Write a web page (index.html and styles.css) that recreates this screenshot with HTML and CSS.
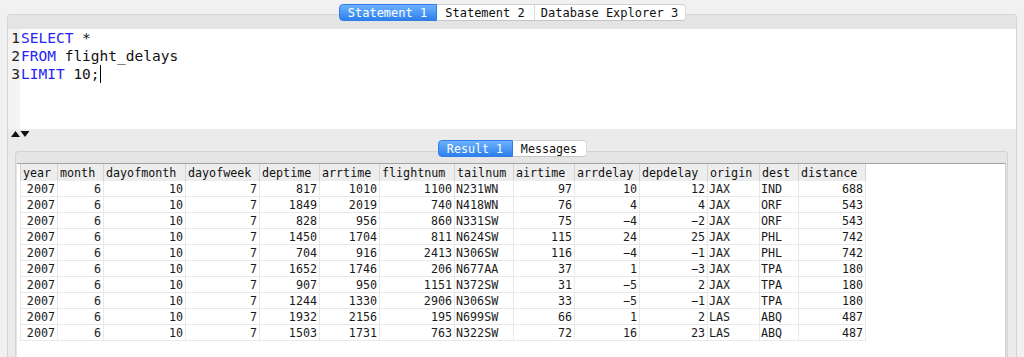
FILE: index.html
```html
<!DOCTYPE html>
<html>
<head>
    <title>SQL Workbench</title>
    <link rel="stylesheet" href="styles.css">
</head>
<body>

    <div class="tabbar top-tabs">
        <span class="tab active">Statement 1</span>
        <span class="tab">Statement 2</span>
        <span class="tab">Database Explorer 3</span>
    </div>

    <div class="workspace">
        <div class="editor">
            <div class="editor-head"></div>
            <div class="editor-body">
                <div class="gutter">
                    <div>1</div>
                    <div>2</div>
                    <div>3</div>
                </div>
                <div class="code">
                    <div class="line"><span class="kw">SELECT</span> *</div>
                    <div class="line"><span class="kw">FROM</span> flight_delays</div>
                    <div class="line"><span class="kw">LIMIT</span> 10;<span class="cursor"></span></div>
                </div>
            </div>
        </div>

        <div class="splitter">
            <svg width="20" height="6" viewBox="0 0 20 6">
                <polygon points="0,6 4.5,0 9,6" fill="#111"/>
                <polygon points="9.5,0 18.5,0 14,6" fill="#111"/>
            </svg>
        </div>

        <div class="tabbar result-tabs">
            <span class="tab active">Result 1</span>
            <span class="tab">Messages</span>
        </div>

        <div class="results">
            <div class="results-head"></div>
            <div class="results-body">
                <table class="grid">
                    <colgroup>
                        <col class="w37"><col class="w46"><col class="w82"><col class="w74">
                        <col class="w60"><col class="w60"><col class="w75"><col class="w59">
                        <col class="w61"><col class="w65"><col class="w68"><col class="w52">
                        <col class="w39"><col class="w67">
                    </colgroup>
                    <thead>
                        <tr>
                            <th>year</th><th>month</th><th>dayofmonth</th><th>dayofweek</th>
                            <th>deptime</th><th>arrtime</th><th>flightnum</th><th>tailnum</th>
                            <th>airtime</th><th>arrdelay</th><th>depdelay</th><th>origin</th>
                            <th>dest</th><th>distance</th>
                        </tr>
                    </thead>
                    <tbody>
                        <tr><td>2007</td><td>6</td><td>10</td><td>7</td><td>817</td><td>1010</td><td>1100</td><td class="txt">N231WN</td><td>97</td><td>10</td><td>12</td><td class="txt">JAX</td><td class="txt">IND</td><td>688</td></tr>
                        <tr><td>2007</td><td>6</td><td>10</td><td>7</td><td>1849</td><td>2019</td><td>740</td><td class="txt">N418WN</td><td>76</td><td>4</td><td>4</td><td class="txt">JAX</td><td class="txt">ORF</td><td>543</td></tr>
                        <tr><td>2007</td><td>6</td><td>10</td><td>7</td><td>828</td><td>956</td><td>860</td><td class="txt">N331SW</td><td>75</td><td>&minus;4</td><td>&minus;2</td><td class="txt">JAX</td><td class="txt">ORF</td><td>543</td></tr>
                        <tr><td>2007</td><td>6</td><td>10</td><td>7</td><td>1450</td><td>1704</td><td>811</td><td class="txt">N624SW</td><td>115</td><td>24</td><td>25</td><td class="txt">JAX</td><td class="txt">PHL</td><td>742</td></tr>
                        <tr><td>2007</td><td>6</td><td>10</td><td>7</td><td>704</td><td>916</td><td>2413</td><td class="txt">N306SW</td><td>116</td><td>&minus;4</td><td>&minus;1</td><td class="txt">JAX</td><td class="txt">PHL</td><td>742</td></tr>
                        <tr><td>2007</td><td>6</td><td>10</td><td>7</td><td>1652</td><td>1746</td><td>206</td><td class="txt">N677AA</td><td>37</td><td>1</td><td>&minus;3</td><td class="txt">JAX</td><td class="txt">TPA</td><td>180</td></tr>
                        <tr><td>2007</td><td>6</td><td>10</td><td>7</td><td>907</td><td>950</td><td>1151</td><td class="txt">N372SW</td><td>31</td><td>&minus;5</td><td>2</td><td class="txt">JAX</td><td class="txt">TPA</td><td>180</td></tr>
                        <tr><td>2007</td><td>6</td><td>10</td><td>7</td><td>1244</td><td>1330</td><td>2906</td><td class="txt">N306SW</td><td>33</td><td>&minus;5</td><td>&minus;1</td><td class="txt">JAX</td><td class="txt">TPA</td><td>180</td></tr>
                        <tr><td>2007</td><td>6</td><td>10</td><td>7</td><td>1932</td><td>2156</td><td>195</td><td class="txt">N699SW</td><td>66</td><td>1</td><td>2</td><td class="txt">LAS</td><td class="txt">ABQ</td><td>487</td></tr>
                        <tr><td>2007</td><td>6</td><td>10</td><td>7</td><td>1503</td><td>1731</td><td>763</td><td class="txt">N322SW</td><td>72</td><td>16</td><td>23</td><td class="txt">LAS</td><td class="txt">ABQ</td><td>487</td></tr>
                    </tbody>
                </table>
            </div>
        </div>
    </div>

</body>
</html>
```

FILE: styles.css
```css
html, body {
    margin: 0;
    height: 357px;
    overflow: hidden;
}

body {
    background-color: #f1f1f1;
    font-family: "DejaVu Sans Mono", monospace;
    color: #111;
}

/* segmented tab controls */
.tabbar {
    position: relative;
    z-index: 1;
    display: flex;
    justify-content: center;
    height: 17px;
}

.tabbar .tab {
    display: flex;
    align-items: center;
    justify-content: center;
    height: 15px;
    background-color: #fff;
    border-top: 1px solid #d0d0d0;
    border-bottom: 1px solid #c4c4c4;
    border-right: 1px solid #dcdcdc;
    color: #111;
    white-space: nowrap;
}

.tabbar .tab:first-child {
    border-left: 1px solid #d0d0d0;
    border-radius: 4px 0 0 4px;
}

.tabbar .tab:last-child {
    border-radius: 0 4px 4px 0;
}

.tabbar .tab.active {
    background: linear-gradient(#6db3fb, #2d7fef);
    border-color: #2f7de6;
    color: #fff;
}

.top-tabs {
    margin-top: 4px;
    font-size: 12px;
}

.top-tabs .tab {
    padding: 0 8px;
}

.top-tabs .tab:first-child {
    width: 80px;
}

.top-tabs .tab:nth-child(2) {
    width: 81px;
}

.top-tabs .tab:nth-child(3) {
    width: 134px;
}

.result-tabs {
    font-size: 11.7px;
}

.result-tabs .tab {
    width: 73px;
}

/* main pane */
.workspace {
    margin: -7px 7px 0 7px;
    height: 350px;
    background-color: #ebebeb;
    border: 1px solid #d5d5d5;
    border-bottom: none;
    border-radius: 4px 4px 0 0;
}

.editor-head {
    height: 14px;
    background-color: #e4e4e4;
    border-radius: 4px 4px 0 0;
}

.editor-body {
    display: flex;
    height: 100px;
    background-color: #fff;
    font-size: 14.5px;
    line-height: 18px;
}

.gutter {
    width: 12px;
    background-color: #f4f4f4;
    color: #222;
    text-align: right;
}

.code {
    padding-left: 1px;
    color: #111;
}

.line {
    white-space: pre;
}

.kw {
    color: #2424f4;
}

.cursor {
    display: inline-block;
    width: 1.5px;
    height: 18px;
    background-color: #000;
    vertical-align: top;
}

.splitter {
    height: 9px;
    padding: 2px 0 0 3px;
}

.splitter svg {
    display: block;
}

/* results */
.results {
    margin: -6px 8px 0 7px;
    height: 207px;
    background-color: #e5e5e5;
    border: 1px solid #d3d3d3;
    border-bottom: none;
    border-radius: 4px 4px 0 0;
}

.results-head {
    height: 11px;
}

.results-body {
    height: 194px;
    margin: 0 1px;
    background-color: #fff;
    border-top: 1px solid #a2a2a2;
    border-right: 1px solid #cfcfcf;
    padding-left: 3px;
}

.grid {
    table-layout: fixed;
    width: 845px;
    border-collapse: collapse;
    font-size: 11.7px;
}

.w37 { width: 37px; }
.w39 { width: 39px; }
.w46 { width: 46px; }
.w52 { width: 52px; }
.w59 { width: 59px; }
.w60 { width: 60px; }
.w61 { width: 61px; }
.w65 { width: 65px; }
.w67 { width: 67px; }
.w68 { width: 68px; }
.w74 { width: 74px; }
.w75 { width: 75px; }
.w82 { width: 82px; }

.grid th {
    height: 17px;
    padding: 0 2px;
    background-color: #ededed;
    border-left: 1px solid #d4d4d4;
    border-right: 1px solid #d4d4d4;
    font-weight: normal;
    text-align: left;
    color: #111;
    white-space: nowrap;
}

.grid td {
    height: 15px;
    padding: 0 2px 0 1px;
    border: 1px solid #e9e9e9;
    border-top: none;
    text-align: right;
    color: #1a1a1a;
    white-space: nowrap;
    overflow: hidden;
}

.grid td.txt {
    text-align: left;
}
```
